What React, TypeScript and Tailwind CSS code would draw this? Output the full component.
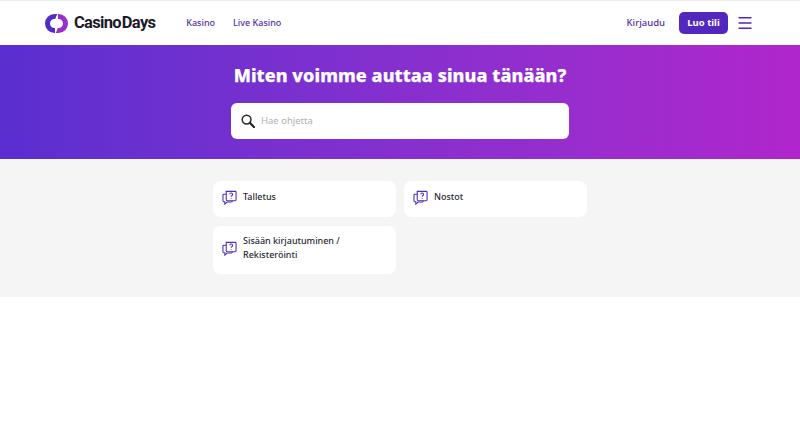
import { Menu } from "lucide-react";

const sans = "font-['Noto_Sans','Open_Sans',sans-serif]";

function Logo() {
  const half = "M12.2 0 L9.5 0 A9.5 9.5 0 0 0 9.5 19 L10 19 L10 14 L9.5 14 A4.5 4.5 0 0 1 9.5 5 L10.2 5 Z";
  return (
    <div className="flex items-center gap-[6px]">
      <svg width="23" height="19" viewBox="0 0 23 19" aria-hidden>
        <path d={half} fill="#4f2ec6" />
        <path d={half} fill="#9a30cc" transform="rotate(180 11.5 9.5)" />
      </svg>
      <span className="font-['Roboto',sans-serif] text-[16.5px] font-bold leading-none tracking-[-0.7px] text-[#1d1a2b]">
        Casino<span className="ml-[1px]">Days</span>
      </span>
    </div>
  );
}

function SearchIcon() {
  return (
    <svg width="14" height="14" viewBox="0 0 14 14" fill="none" stroke="#26242e" aria-hidden>
      <circle cx="5.6" cy="5.6" r="4.4" strokeWidth="1.5" />
      <path d="M8.9 8.9 L13 13" strokeWidth="2.2" strokeLinecap="round" />
    </svg>
  );
}

function HelpIcon() {
  return (
    <svg width="15" height="15" viewBox="0 0 16 16" fill="none" stroke="#4f2fb4" strokeWidth="1.15" aria-hidden>
      <path d="M4.5 1.5 H14 a1 1 0 0 1 1 1 V10.5 a1 1 0 0 1-1 1 H6 a1.5 1.5 0 0 1-1.5-1.5 Z" />
      <path d="M4.5 4.5 H2 a1 1 0 0 0-1 1 V11.5 a1 1 0 0 0 1 1 H3 V15 L5.5 12.8 H10 a1 1 0 0 0 1-1 V11.5" />
      <path d="M8.3 4.6 a1.5 1.5 0 1 1 2 1.5 c-.4.2-.5.5-.5 1" />
      <path d="M9.8 8.6 V9.4" />
    </svg>
  );
}

function Topic({ children }: { children: React.ReactNode }) {
  return (
    <div className="flex min-h-[36px] items-center gap-[6px] rounded-lg bg-white pb-[12px] pl-[9px] pr-[9px] pt-[8px]">
      <span className="flex shrink-0">
        <HelpIcon />
      </span>
      <span className="text-[9px] font-medium leading-[14px] text-[#2b2a35]">{children}</span>
    </div>
  );
}

export default function App() {
  return (
    <div className={`min-h-[439px] bg-white ${sans}`}>
      <header className="flex h-[45px] items-center border-t border-[#ececec] pl-[45px] pr-[46px]">
        <Logo />
        <nav className="ml-[31px] flex gap-[18px] text-[9px] font-medium text-[#4f2fa8]">
          <span>Kasino</span>
          <span>Live Kasino</span>
        </nav>
        <div className="ml-auto flex items-center">
          <span className="text-[9.5px] font-medium text-[#4f2fa8]">Kirjaudu</span>
          <button className="ml-[14px] h-[22px] w-[49px] rounded-[5px] bg-[#5227bd] text-[9.5px] font-bold text-white">
            Luo tili
          </button>
          <Menu size={18} strokeWidth={1.7} className="ml-[8px] text-[#5227bd]" />
        </div>
      </header>

      <section className="flex h-[114px] flex-col items-center bg-gradient-to-r from-[#5a2ed0] to-[#b025cc] pt-[17px]">
        <h1 className="text-[18px] font-extrabold leading-[26px] tracking-[0.08px] text-white [-webkit-text-stroke:0.25px_white]">
          Miten voimme auttaa sinua tänään?
        </h1>
        <div className="mt-[15px] flex h-[36px] w-[338px] items-center rounded-md bg-white pl-[10px]">
          <SearchIcon />
          <span className="ml-[6px] text-[9.5px] text-[#b0b0b3]">Hae ohjetta</span>
        </div>
      </section>

      <section className="flex h-[138px] justify-center bg-[#f5f5f5] pt-[22px]">
        <div className="grid w-[374px] grid-cols-2 content-start items-start gap-x-[8px] gap-y-[9px]">
          <Topic>Talletus</Topic>
          <Topic>Nostot</Topic>
          <Topic>
            Sisään kirjautuminen /
            <br />
            Rekisteröinti
          </Topic>
        </div>
      </section>
    </div>
  );
}
